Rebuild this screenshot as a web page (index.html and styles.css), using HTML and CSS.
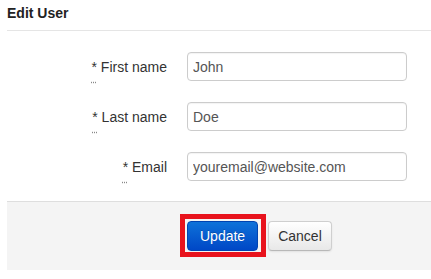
FILE: index.html
```html
<!DOCTYPE html>
<html>
<head>
<meta charset="utf-8">
<title>Edit User</title>
<link rel="stylesheet" href="styles.css">
</head>
<body>
<div class="panel">
  <div class="panel-header">
    <h3 class="panel-title">Edit User</h3>
  </div>
  <form class="form">
    <div class="form-body">
      <div class="row">
        <label class="label" for="fn"><abbr class="req" title="required">*</abbr> First name</label>
        <input class="input" id="fn" type="text" value="John">
      </div>
      <div class="row">
        <label class="label" for="ln"><abbr class="req" title="required">*</abbr> Last name</label>
        <input class="input" id="ln" type="text" value="Doe">
      </div>
      <div class="row">
        <label class="label" for="em"><abbr class="req" title="required">*</abbr> Email</label>
        <input class="input" id="em" type="text" value="youremail@website.com">
      </div>
    </div>
    <div class="form-actions">
      <button type="button" class="btn btn-primary highlight">Update</button>
      <button type="button" class="btn btn-default">Cancel</button>
    </div>
  </form>
</div>
</body>
</html>
```
FILE: styles.css
```css
html, body {
  margin: 0;
  padding: 0;
  background: #fff;
}
body {
  font-family: "Liberation Sans", Arial, sans-serif;
  font-size: 14px;
  color: #333;
}
.panel {
  margin-left: 7px;
}
.panel-header {
  padding: 3px 0 7px 0;
  border-bottom: 1px solid #e5e5e5;
}
.panel-title {
  margin: 0;
  font-size: 14px;
  line-height: 20px;
  font-weight: bold;
  color: #222;
}
.form {
  margin: 0;
}
.form-body {
  display: flex;
  flex-direction: column;
  gap: 21px;
  padding: 21px 0 20px 0;
}
.row {
  display: flex;
  align-items: center;
  gap: 20px;
}
.label {
  width: 160px;
  text-align: right;
  line-height: 20px;
  color: #333;
}
.req {
  text-decoration: underline dotted #888;
  text-underline-offset: 10px;
  border: none;
  cursor: help;
}
.input {
  box-sizing: border-box;
  width: 220px;
  height: 29px;
  margin: 0;
  padding: 0 5px;
  border: 1px solid #ccc;
  border-radius: 4px;
  font-family: "Liberation Sans", Arial, sans-serif;
  font-size: 14px;
  color: #555;
  background: #fff;
  box-shadow: inset 0 1px 1px rgba(0,0,0,0.05);
  outline: none;
}
.form-actions {
  display: flex;
  align-items: center;
  gap: 10px;
  padding: 19px 0 19px 180px;
  background: #f4f4f4;
  border-top: 1px solid #dedede;
}
.btn {
  box-sizing: border-box;
  height: 30px;
  margin: 0;
  border-radius: 4px;
  font-family: "Liberation Sans", Arial, sans-serif;
  font-size: 14px;
  line-height: 20px;
  cursor: pointer;
}
.btn-primary {
  padding: 0 12px;
  color: #fff;
  border: 1px solid #0043b0;
  background: linear-gradient(to bottom, #0e72d9, #0047c6);
  text-shadow: 0 -1px 0 rgba(0,0,0,0.2);
}
.btn-default {
  padding: 0 9px;
  color: #333;
  border: 1px solid #cfcfcf;
  border-bottom-color: #b8b8b8;
  background: linear-gradient(to bottom, #ffffff, #e8e8e8);
  box-shadow: 0 1px 2px rgba(0,0,0,0.08);
}
.highlight {
  position: relative;
}
.highlight::after {
  content: "";
  position: absolute;
  top: -8px;
  left: -8px;
  right: -9px;
  bottom: -7px;
  border: 5px solid #e8131d;
  pointer-events: none;
}
```
